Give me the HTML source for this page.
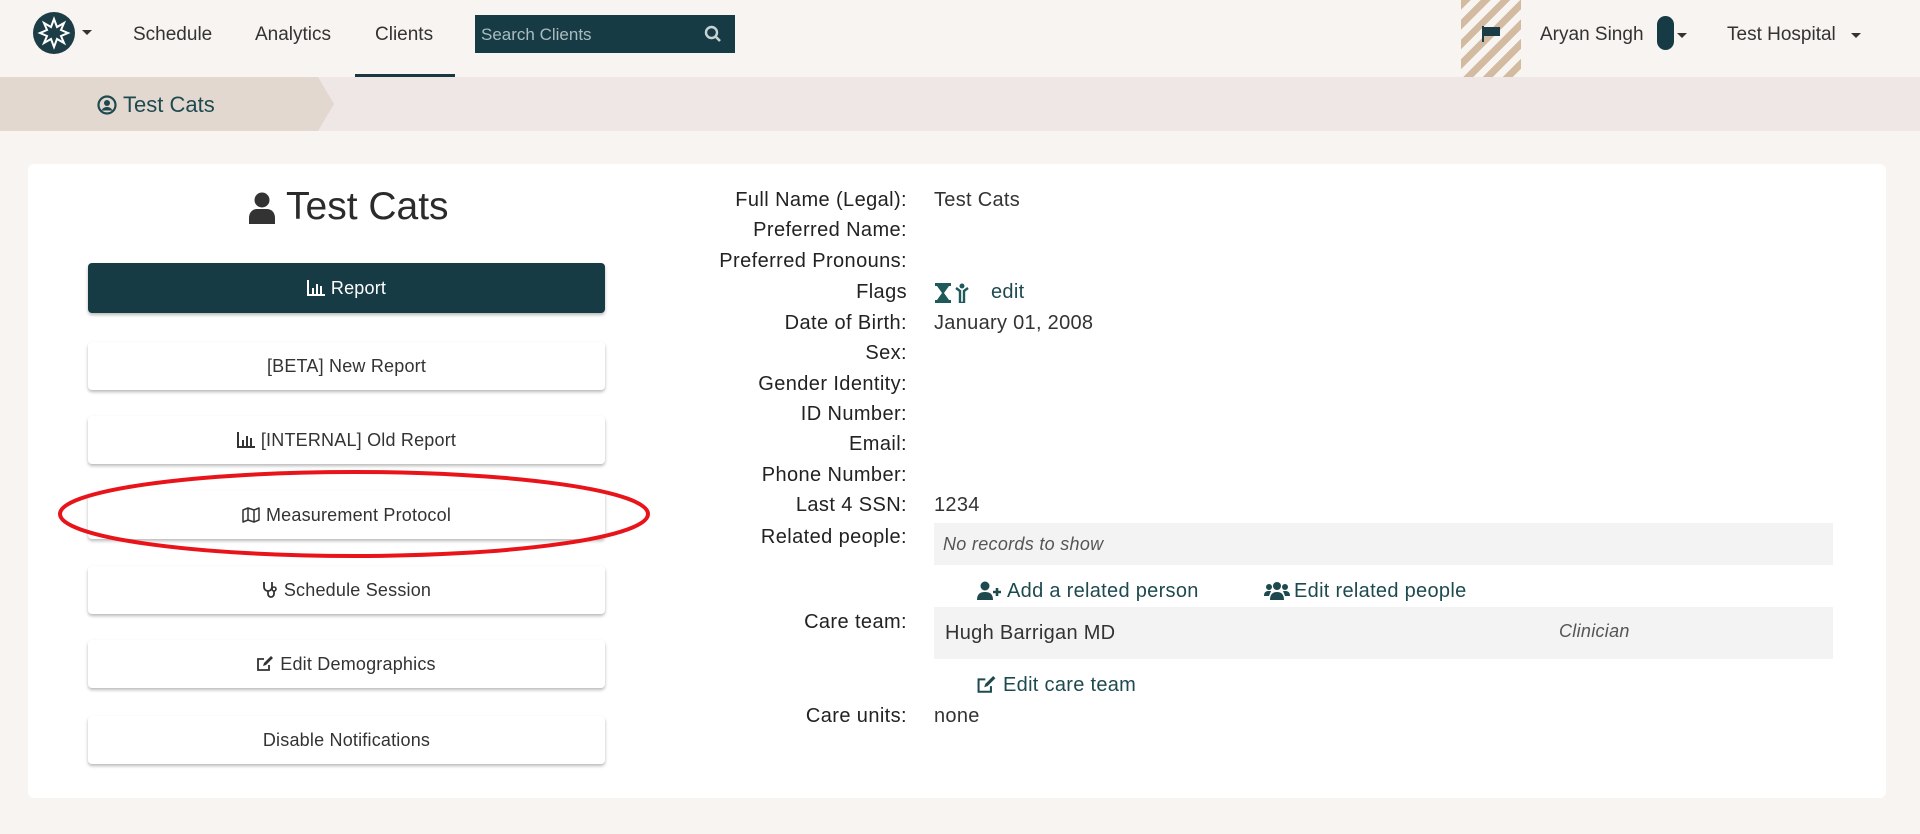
<!DOCTYPE html>
<html><head><meta charset="utf-8"><style>
*{box-sizing:border-box;margin:0;padding:0}
body{width:1920px;height:834px;background:#f7f4f1;font-family:"Liberation Sans",sans-serif;color:#2b2b2b;position:relative;overflow:hidden}
.a{position:absolute;white-space:nowrap}
.nav{font-size:19px;color:#333;top:24px}
.btn{position:absolute;left:88px;width:517px;height:48px;background:#fff;border-radius:4px;box-shadow:0 2px 3px rgba(0,0,0,.28);display:flex;align-items:center;justify-content:center;font-size:18px;color:#333;gap:6px;letter-spacing:.2px}
.lab{position:absolute;right:1013px;font-size:20px;letter-spacing:.4px;color:#222;white-space:nowrap}
.val{position:absolute;left:934px;font-size:20px;letter-spacing:.3px;color:#333;white-space:nowrap}
.lnk{color:#1e4a4f}
</style></head><body>
<svg class="a" style="left:33px;top:12px" width="42" height="42" viewBox="0 0 42 42"><circle cx="21" cy="21" r="21" fill="#1c3d45"/><polygon points="21,7 24,15 31,11 28,18 35,21 28,24 31,31 24,27 21,35 18,27 11,31 14,24 7,21 14,18 11,11 18,15" fill="none" stroke="#fff" stroke-width="2"/></svg>
<div class="a" style="left:82px;top:30px;border-left:5px solid transparent;border-right:5px solid transparent;border-top:5px solid #333"></div>
<div class="a nav" style="left:133px">Schedule</div>
<div class="a nav" style="left:255px">Analytics</div>
<div class="a nav" style="left:375px">Clients</div>
<div class="a" style="left:355px;top:74px;width:100px;height:4px;background:#173840"></div>
<div class="a" style="left:475px;top:15px;width:260px;height:38px;background:#173b45;color:#a9bcbf;font-size:17px;padding:10px 6px">Search Clients</div>
<svg class="a" style="left:704px;top:25px" width="18" height="18" viewBox="0 0 18 18"><circle cx="7.5" cy="7.5" r="5.5" fill="none" stroke="#c9d3d4" stroke-width="2.4"/><line x1="11.5" y1="11.5" x2="16" y2="16" stroke="#c9d3d4" stroke-width="2.6"/></svg>
<div class="a" style="left:1461px;top:0;width:60px;height:77px;background:repeating-linear-gradient(135deg,#d2bba0 0 7px,#f7f4f1 7px 14px)"></div>
<svg class="a" style="left:1482px;top:26px" width="20" height="16" viewBox="0 0 20 16"><rect x="0" y="0" width="2" height="16" fill="#1c3d45"/><path d="M2 1h16v9H2z" fill="#1c3d45"/></svg>
<div class="a nav" style="left:1540px">Aryan Singh</div>
<div class="a" style="left:1657px;top:16px;width:17px;height:34px;border-radius:9px;background:#173b45"></div>
<div class="a" style="left:1677px;top:33px;border-left:5px solid transparent;border-right:5px solid transparent;border-top:5px solid #333"></div>
<div class="a nav" style="left:1727px">Test Hospital</div>
<div class="a" style="left:1851px;top:33px;border-left:5px solid transparent;border-right:5px solid transparent;border-top:5px solid #333"></div>
<div class="a" style="left:0;top:77px;width:1920px;height:54px;background:#efe7e5"></div>
<svg class="a" style="left:0;top:77px" width="340" height="54"><polygon points="0,0 318,0 334,27 318,54 0,54" fill="#e3d8d0"/></svg>
<svg class="a" style="left:97px;top:95px" width="20" height="20" viewBox="0 0 20 20"><circle cx="10" cy="10" r="8.5" fill="none" stroke="#1e4a4f" stroke-width="2.2"/><circle cx="10" cy="8" r="3" fill="#1e4a4f"/><path d="M4.5 15.5c1.5-3 3.5-3.5 5.5-3.5s4 .5 5.5 3.5" fill="#1e4a4f"/></svg>
<div class="a" style="left:123px;top:92px;font-size:22px;color:#1e4a4f">Test Cats</div>
<div class="a" style="left:28px;top:164px;width:1858px;height:634px;background:#fff;border-radius:6px"></div>
<svg class="a" style="left:248px;top:192px" width="28" height="32" viewBox="0 0 28 32"><circle cx="14" cy="8" r="7.5" fill="#333"/><path d="M1 32v-6c0-6 4-9 8-9h10c4 0 8 3 8 9v6z" fill="#333"/></svg>
<div class="a" style="left:286px;top:185px;font-size:39px;color:#2b2b2b">Test Cats</div>
<div class="btn" style="top:263px;height:50px;background:#173b45;color:#fff"><svg width="18" height="16" viewBox="0 0 18 16"><path d="M1 0v15h17" fill="none" stroke="#fff" stroke-width="2"/><path d="M5 8h2v6H5zM9 4h2v10H9zM13 6h2v8h-2z" fill="#fff"/></svg>Report</div>
<div class="btn" style="top:342px">[BETA] New Report</div>
<div class="btn" style="top:416px"><svg width="18" height="16" viewBox="0 0 18 16"><path d="M1 0v15h17" fill="none" stroke="#333" stroke-width="2"/><path d="M5 8h2v6H5zM9 4h2v10H9zM13 6h2v8h-2z" fill="#333"/></svg>[INTERNAL] Old Report</div>
<div class="btn" style="top:491px"><svg width="18" height="16" viewBox="0 0 18 16"><path d="M1 3l5-2 6 2 5-2v12l-5 2-6-2-5 2zM6 1v12M12 3v12" fill="none" stroke="#333" stroke-width="1.5" stroke-linejoin="round"/></svg>Measurement Protocol</div>
<div class="btn" style="top:566px"><svg width="16" height="18" viewBox="0 0 16 18"><path d="M2 1v5a4 4 0 0 0 8 0V1M6 10v3a3 3 0 0 0 6 0v-3" fill="none" stroke="#333" stroke-width="1.8"/><circle cx="12" cy="8" r="2" fill="none" stroke="#333" stroke-width="1.6"/></svg>Schedule Session</div>
<div class="btn" style="top:640px"><svg width="17" height="16" viewBox="0 0 17 16"><path d="M12 9v5H1V3h6" fill="none" stroke="#333" stroke-width="1.8"/><path d="M6 10l1-3 7-7 2 2-7 7z" fill="#333"/></svg>Edit Demographics</div>
<div class="btn" style="top:716px">Disable Notifications</div>
<svg class="a" style="left:56px;top:468px" width="600" height="94"><ellipse cx="298" cy="46" rx="294" ry="42" fill="none" stroke="#e8141a" stroke-width="4"/></svg>
<div class="lab" style="top:189px">Full Name (Legal):</div><div class="val" style="top:189px">Test Cats</div>
<div class="lab" style="top:219px">Preferred Name:</div>
<div class="lab" style="top:250px">Preferred Pronouns:</div>
<div class="lab" style="top:281px">Flags</div>
<svg class="a" style="left:935px;top:283px" width="36" height="20" viewBox="0 0 36 20"><path d="M0 0h16v3h-2l-5 7 5 7h2v3H0v-3h2l5-7-5-7H0z" fill="#1e5a5a"/><circle cx="27" cy="3" r="2.5" fill="#1e5a5a"/><path d="M21 5l4 3v12h4V8l4-3" fill="none" stroke="#1e5a5a" stroke-width="2.4"/></svg>
<div class="val lnk" style="top:281px;left:991px">edit</div>
<div class="lab" style="top:312px">Date of Birth:</div><div class="val" style="top:312px">January 01, 2008</div>
<div class="lab" style="top:342px">Sex:</div>
<div class="lab" style="top:373px">Gender Identity:</div>
<div class="lab" style="top:403px">ID Number:</div>
<div class="lab" style="top:433px">Email:</div>
<div class="lab" style="top:464px">Phone Number:</div>
<div class="lab" style="top:494px">Last 4 SSN:</div><div class="val" style="top:494px">1234</div>
<div class="lab" style="top:526px">Related people:</div>
<div class="a" style="left:934px;top:523px;width:899px;height:42px;background:#f3f3f3"></div>
<div class="val" style="top:534px;left:943px;font-style:italic;font-size:18px;color:#555">No records to show</div>
<svg class="a" style="left:977px;top:581px" width="26" height="20" viewBox="0 0 26 20"><circle cx="8" cy="5" r="4.5" fill="#1e4a4f"/><path d="M0 19c0-6 3-8 8-8s8 2 8 8z" fill="#1e4a4f"/><path d="M20 7v8M16 11h8" stroke="#1e4a4f" stroke-width="2.6"/></svg>
<div class="val lnk" style="top:580px;left:1007px">Add a related person</div>
<svg class="a" style="left:1264px;top:581px" width="26" height="20" viewBox="0 0 26 20"><circle cx="13" cy="5" r="4" fill="#1e4a4f"/><circle cx="5" cy="6" r="3" fill="#1e4a4f"/><circle cx="21" cy="6" r="3" fill="#1e4a4f"/><path d="M6 19c0-6 3-8 7-8s7 2 7 8z" fill="#1e4a4f"/><path d="M0 15c0-4 2-5 5-5h2l-2 5zM26 15c0-4-2-5-5-5h-2l2 5z" fill="#1e4a4f"/></svg>
<div class="val lnk" style="top:580px;left:1294px">Edit related people</div>
<div class="lab" style="top:611px">Care team:</div>
<div class="a" style="left:934px;top:607px;width:899px;height:52px;background:#f3f3f3"></div>
<div class="val" style="top:622px;left:945px">Hugh Barrigan MD</div>
<div class="val" style="top:621px;left:1559px;font-style:italic;font-size:18px;color:#555">Clinician</div>
<svg class="a" style="left:977px;top:676px" width="20" height="18" viewBox="0 0 17 16"><path d="M12 9v5H1V3h6" fill="none" stroke="#1e4a4f" stroke-width="1.8"/><path d="M6 10l1-3 7-7 2 2-7 7z" fill="#1e4a4f"/></svg>
<div class="val lnk" style="top:674px;left:1003px">Edit care team</div>
<div class="lab" style="top:705px">Care units:</div><div class="val" style="top:705px">none</div>
</body></html>
